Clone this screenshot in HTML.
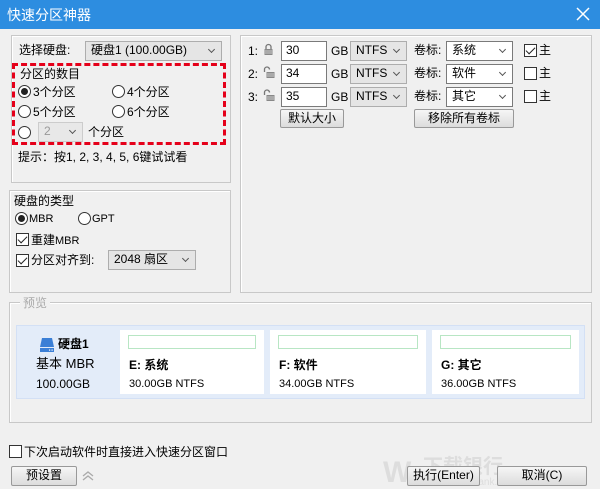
<!DOCTYPE html>
<html><head><meta charset="utf-8"><style>
*{box-sizing:border-box;margin:0;padding:0}
body{width:600px;height:489px;background:#f0f0f0;font-family:"Liberation Sans","Noto Sans CJK SC",sans-serif;font-size:12px;color:#000;position:relative;overflow:hidden}
.a{position:absolute;white-space:nowrap;line-height:14px}
.box{position:absolute;border:1px solid #c8c8c8;box-shadow:inset 1px 1px 0 #fff}
.sel{position:absolute;border:1px solid #adadad;background:#e5e5e5;padding-left:5px;line-height:17px;font-size:12px}
.sel.w{background:#fff;border-color:#7a7a7a}
.sel:after{content:"";position:absolute;right:7px;top:5px;width:4px;height:4px;border-right:1px solid #555;border-bottom:1px solid #555;transform:rotate(45deg)}
.inp{position:absolute;border:1px solid #7a7a7a;background:#fff;padding-left:4px;line-height:17px}
.btn{position:absolute;border:1px solid #999;border-radius:2px;background:linear-gradient(#f6f6f6,#dcdcdc);text-align:center;line-height:17px}
.rad{position:absolute;width:13px;height:13px;border:1px solid #333;border-radius:50%;background:#fff}
.rad.on:after{content:"";position:absolute;left:2px;top:2px;width:7px;height:7px;border-radius:50%;background:#222}
.chk{position:absolute;width:13px;height:13px;border:1px solid #333;background:#fff}
.chk.on:after{content:"";position:absolute;left:3px;top:0px;width:4px;height:8px;border-right:1.5px solid #222;border-bottom:1.5px solid #222;transform:rotate(45deg)}
.card{position:absolute;top:330px;height:64px;background:#fff}
.bar{position:absolute;left:8px;right:8px;top:5px;height:14px;border:1px solid #b8e6c4}
svg{position:absolute}
</style></head><body>
<div class="a" style="left:0;top:0;width:600px;height:29px;background:#2d8de0"></div>
<div class="a" style="left:7px;top:7px;color:#fff;font-size:14px;line-height:16px">快速分区神器</div>
<svg style="left:576px;top:7px" width="14" height="14"><path d="M1 1L13 13M13 1L1 13" stroke="#fff" stroke-width="1.5"/></svg>

<div class="box" style="left:11px;top:35px;width:220px;height:148px"></div>
<div class="a" style="left:19px;top:43px">选择硬盘:</div>
<div class="sel" style="left:85px;top:41px;width:137px;height:20px">硬盘1 (100.00GB)</div>
<div class="a" style="left:12px;top:63px;width:214px;height:82px;border:3px dashed #e5001a"></div>
<div class="a" style="left:20px;top:67px">分区的数目</div>
<div class="rad on" style="left:18px;top:85px"></div><div class="a" style="left:33px;top:85px">3个分区</div>
<div class="rad" style="left:112px;top:85px"></div><div class="a" style="left:127px;top:85px">4个分区</div>
<div class="rad" style="left:18px;top:105px"></div><div class="a" style="left:33px;top:105px">5个分区</div>
<div class="rad" style="left:112px;top:105px"></div><div class="a" style="left:127px;top:105px">6个分区</div>
<div class="rad" style="left:18px;top:126px"></div>
<div class="sel" style="left:38px;top:122px;width:45px;height:20px;color:#999;background:#e8e8e8;border-color:#ccc">2</div>
<div class="a" style="left:88px;top:125px">个分区</div>
<div class="a" style="left:18px;top:150px">提示：按1, 2, 3, 4, 5, 6键试试看</div>

<div class="box" style="left:9px;top:190px;width:222px;height:103px"></div>
<div class="a" style="left:14px;top:194px">硬盘的类型</div>
<div class="rad on" style="left:15px;top:212px"></div><div class="a" style="left:29px;top:212px;font-size:11px">MBR</div>
<div class="rad" style="left:78px;top:212px"></div><div class="a" style="left:92px;top:212px;font-size:11px">GPT</div>
<div class="chk on" style="left:16px;top:233px"></div><div class="a" style="left:31px;top:233px">重建<span style="font-size:11px">MBR</span></div>
<div class="chk on" style="left:16px;top:254px"></div><div class="a" style="left:31px;top:253px">分区对齐到:</div>
<div class="sel" style="left:108px;top:250px;width:88px;height:20px">2048 扇区</div>

<div class="box" style="left:240px;top:35px;width:352px;height:258px"></div>
<div class="a" style="left:248px;top:44px">1:</div><div class="a" style="left:248px;top:67px">2:</div><div class="a" style="left:248px;top:90px">3:</div>
<svg style="left:263px;top:43px" width="11" height="13"><path d="M3 6V4a2.5 2.5 0 0 1 5 0v2" fill="none" stroke="#777" stroke-width="1.3"/><rect x="1.5" y="6" width="8" height="6" fill="#888"/><path d="M2 8h7M2 10h7" stroke="#ccc"/></svg>
<svg style="left:263px;top:66px" width="13" height="13"><path d="M1.5 6V3.5a2.5 2.5 0 0 1 5 0" fill="none" stroke="#777" stroke-width="1.3"/><rect x="3.5" y="6" width="8" height="6" fill="#888"/><path d="M4 8h7M4 10h7" stroke="#ccc"/></svg>
<svg style="left:263px;top:89px" width="13" height="13"><path d="M1.5 6V3.5a2.5 2.5 0 0 1 5 0" fill="none" stroke="#777" stroke-width="1.3"/><rect x="3.5" y="6" width="8" height="6" fill="#888"/><path d="M4 8h7M4 10h7" stroke="#ccc"/></svg>
<div class="inp" style="left:281px;top:41px;width:46px;height:20px">30</div>
<div class="inp" style="left:281px;top:64px;width:46px;height:20px">34</div>
<div class="inp" style="left:281px;top:87px;width:46px;height:20px">35</div>
<div class="a" style="left:331px;top:44px">GB</div><div class="a" style="left:331px;top:67px">GB</div><div class="a" style="left:331px;top:90px">GB</div>
<div class="sel" style="left:350px;top:41px;width:57px;height:20px">NTFS</div>
<div class="sel" style="left:350px;top:64px;width:57px;height:20px">NTFS</div>
<div class="sel" style="left:350px;top:87px;width:57px;height:20px">NTFS</div>
<div class="a" style="left:414px;top:43px">卷标:</div><div class="a" style="left:414px;top:66px">卷标:</div><div class="a" style="left:414px;top:89px">卷标:</div>
<div class="sel w" style="left:446px;top:41px;width:67px;height:20px">系统</div>
<div class="sel w" style="left:446px;top:64px;width:67px;height:20px">软件</div>
<div class="sel w" style="left:446px;top:87px;width:67px;height:20px">其它</div>
<div class="chk on" style="left:524px;top:44px"></div><div class="a" style="left:539px;top:43px">主</div>
<div class="chk" style="left:524px;top:67px"></div><div class="a" style="left:539px;top:66px">主</div>
<div class="chk" style="left:524px;top:90px"></div><div class="a" style="left:539px;top:89px">主</div>
<div class="btn" style="left:280px;top:109px;width:64px;height:19px">默认大小</div>
<div class="btn" style="left:414px;top:109px;width:100px;height:19px">移除所有卷标</div>

<div class="box" style="left:9px;top:302px;width:583px;height:121px"></div>
<div class="a" style="left:20px;top:296px;background:#f0f0f0;padding:0 3px;color:#aaa">预览</div>
<div class="a" style="left:16px;top:325px;width:569px;height:74px;background:#e3ecf9;border:1px solid #d3e0f5"></div>
<svg style="left:39px;top:337px" width="16" height="17"><path d="M3 1h10l2 9H1z" fill="#3b7fd6"/><rect x="1" y="11" width="14" height="4" fill="#3b7fd6"/><rect x="10" y="12.5" width="1.2" height="1.2" fill="#fff"/><rect x="12.5" y="12.5" width="1.2" height="1.2" fill="#fff"/></svg>
<div class="a" style="left:58px;top:337px;font-weight:bold">硬盘1</div>
<div class="a" style="left:36px;top:357px;font-size:13px">基本 MBR</div>
<div class="a" style="left:36px;top:377px;font-size:12px">100.00GB</div>
<div class="card" style="left:120px;width:144px"><div class="bar"></div><div class="a" style="left:9px;top:28px;font-weight:bold">E: 系统</div><div class="a" style="left:9px;top:47px;font-size:11px">30.00GB NTFS</div></div>
<div class="card" style="left:270px;width:156px"><div class="bar"></div><div class="a" style="left:9px;top:28px;font-weight:bold">F: 软件</div><div class="a" style="left:9px;top:47px;font-size:11px">34.00GB NTFS</div></div>
<div class="card" style="left:432px;width:147px"><div class="bar"></div><div class="a" style="left:9px;top:28px;font-weight:bold">G: 其它</div><div class="a" style="left:9px;top:47px;font-size:11px">36.00GB NTFS</div></div>

<div class="chk" style="left:9px;top:445px"></div><div class="a" style="left:24px;top:445px">下次启动软件时直接进入快速分区窗口</div>
<div class="btn" style="left:11px;top:466px;width:66px;height:20px">预设置</div>
<svg style="left:82px;top:470px" width="12" height="12"><path d="M1 6l5-4 5 4M1 10l5-4 5 4" fill="none" stroke="#aaa" stroke-width="1.3"/></svg>
<div class="a" style="left:383px;top:458px;color:#ddd;font-size:30px;font-weight:bold;line-height:30px">W</div>
<div class="a" style="left:423px;top:456px;color:#ddd;font-size:20px;font-weight:bold;line-height:22px">下载银行</div>
<div class="a" style="left:425px;top:478px;color:#ddd;font-size:10px;line-height:10px">www.downbank.cn</div>
<div class="btn" style="left:407px;top:466px;width:73px;height:20px">执行(Enter)</div>
<div class="btn" style="left:497px;top:466px;width:90px;height:20px">取消(C)</div>
</body></html>
